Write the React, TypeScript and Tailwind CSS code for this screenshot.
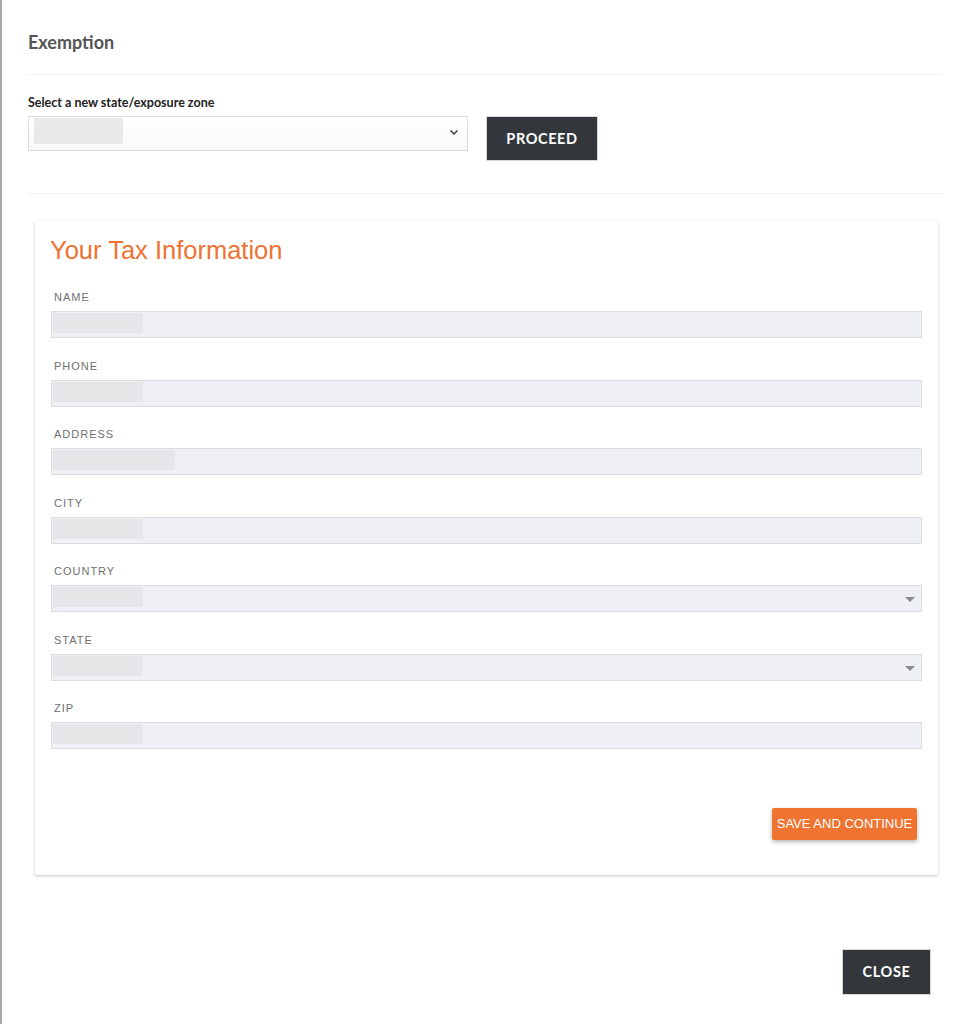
import React from "react";

const fields = [
  { label: "NAME", dropdown: false, ph: 90 },
  { label: "PHONE", dropdown: false, ph: 90 },
  { label: "ADDRESS", dropdown: false, ph: 122 },
  { label: "CITY", dropdown: false, ph: 90 },
  { label: "COUNTRY", dropdown: true, ph: 90 },
  { label: "STATE", dropdown: true, ph: 90 },
  { label: "ZIP", dropdown: false, ph: 90 },
];

function Field({ label, dropdown, ph }: { label: string; dropdown: boolean; ph: number }) {
  return (
    <div>
      <div className="pl-[3px] text-[11px] leading-[15px] tracking-[1px] text-[#6f6f6f]">{label}</div>
      <div className="relative mt-[6px] h-[27px] border border-[#dcdde2] bg-[#eff0f5]">
        <div className="ml-[1px] mt-[1px] h-[20px] bg-[#e6e6e8]" style={{ width: ph }} />
        {dropdown ? (
          <div className="absolute right-[6px] top-[11px] h-0 w-0 border-x-[5px] border-t-[5px] border-x-transparent border-t-[#8a8a8a]" />
        ) : null}
      </div>
    </div>
  );
}

export default function App() {
  return (
    <div className="min-h-[1024px] border-l-2 border-[#a8a8a8] bg-white pl-[26px] pr-[27px] font-['Lato','Open_Sans',sans-serif]">
      <h2 className="pt-[30px] pb-[20px] text-[18px] font-bold leading-[24px] text-[#555]">Exemption</h2>
      <div className="border-t border-[#f1f1f1]" />

      <div className="flex items-start pt-[20px]">
        <div>
          <label className="block text-[12.5px] font-bold leading-[16px] text-[#222]">
            Select a new state/exposure zone
          </label>
          <div className="relative mt-[5px] h-[35px] w-[440px] border border-[#dedede] bg-gradient-to-b from-white to-[#f8f8f8]">
            <div className="ml-[5px] mt-[1px] h-[26px] w-[89px] bg-[#e9e9e9]" />
            <svg className="absolute right-[8px] top-[12px]" width="10" height="7" viewBox="0 0 10 7">
              <path d="M1.5 1.5 L5 5 L8.5 1.5" fill="none" stroke="#333" strokeWidth="1.4" />
            </svg>
          </div>
        </div>
        <button className="ml-[18px] mt-[21px] h-[45px] w-[112px] border border-[#d8d8d8] bg-[#33363b] text-[14.5px] font-bold tracking-[0.6px] text-white">
          PROCEED
        </button>
      </div>

      <div className="mt-[32px] border-t border-[#f3f3f3]" />

      <div className="ml-[7px] mr-[5px] mt-[27px] rounded-[2px] bg-white pb-[35px] pl-[16px] pr-[16px] pt-[14px] font-['Liberation_Sans','Arial',sans-serif] shadow-[0_1px_3px_rgba(0,0,0,0.25)]">
        <h3 className="-ml-[1px] text-[25.5px] leading-[30px] text-[#ee7332]">Your Tax Information</h3>
        <div className="mt-[25px] flex flex-col gap-[20.5px]">
          {fields.map((f) => (
            <Field key={f.label} {...f} />
          ))}
        </div>
        <div className="mt-[59px] flex justify-end pr-[5px]">
          <button className="h-[32px] w-[145px] rounded-[2px] bg-[#ef7331] text-[13px] text-white shadow-[0_2px_4px_rgba(0,0,0,0.3)]">
            SAVE AND CONTINUE
          </button>
        </div>
      </div>

      <div className="mt-[74px] flex justify-end pr-[12px]">
        <button className="h-[46px] w-[89px] border border-[#d8d8d8] bg-[#33363b] text-[14.5px] font-bold tracking-[0.6px] text-white">
          CLOSE
        </button>
      </div>
    </div>
  );
}
